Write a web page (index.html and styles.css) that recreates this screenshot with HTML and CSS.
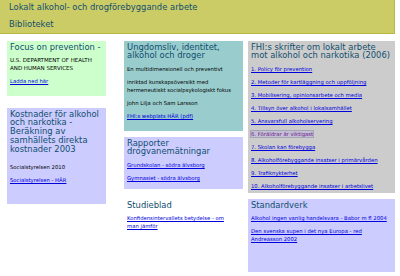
FILE: index.html
```
<!DOCTYPE html>
<html>

<head>
    <title>Biblioteket</title>
    <link rel="stylesheet" href="styles.css">
</head>

<body>
    <div class="top">
        <p>Lokalt alkohol- och drogförebyggande arbete</p>
        <p>Biblioteket</p>
    </div>

    <div class="cols">
        <div class="col col-a">
            <div class="box green focus">
                <h2>Focus on prevention -</h2>
                <p class="caps">U.S. DEPARTMENT OF HEALTH<br>AND HUMAN SERVICES</p>
                <p><a href="#">Ladda ned här</a></p>
            </div>
            <div class="box lav kostnad">
                <h2>Kostnader för alkohol<br>och narkotika -<br>Beräkning av<br>samhällets direkta<br>kostnader 2003</h2>
                <p class="after">Socialstyrelsen 2010</p>
                <p><a href="#">Socialstyrelsen - HÄR</a></p>
            </div>
        </div>

        <div class="col col-b">
            <div class="box teal ungdom">
                <h2>Ungdomsliv, identitet,<br>alkohol och droger</h2>
                <p>En multidimensionell och preventivt</p>
                <p>inriktad kunskapsöversikt med<br>hermeneutiskt socialpsykologiskt fokus</p>
                <p>John Lilja och Sam Larsson</p>
                <p><a href="#">FHI:s webplats HÄR (pdf)</a></p>
            </div>
            <div class="box lav rapport">
                <h2>Rapporter<br>drogvanemätningar</h2>
                <p><a href="#">Grundskolan - södra älvsborg</a></p>
                <p><a href="#">Gymnasiet - södra älvsborg</a></p>
            </div>
            <div class="box studie">
                <h2>Studieblad</h2>
                <p><a href="#">Konfidensintervallets betydelse - om<br>man jämför</a></p>
            </div>
        </div>

        <div class="col col-c">
            <div class="box gray fhi">
                <h2>FHI:s skrifter om lokalt arbete<br>mot alkohol och narkotika (2006)</h2>
                <p><a href="#">1. Policy för prevention</a></p>
                <p><a href="#">2. Metoder för kartläggning och uppföljning</a></p>
                <p><a href="#">3. Mobilisering, opinionsarbete och media</a></p>
                <p><a href="#">4. Tillsyn över alkohol i lokalsamhället</a></p>
                <p><a href="#">5. Ansvarsfull alkoholservering</a></p>
                <p><a href="#" class="seen">6. Föräldrar är viktigast</a></p>
                <p><a href="#">7. Skolan kan förebygga</a></p>
                <p><a href="#">8. Alkoholförebyggande insatser i primärvården</a></p>
                <p><a href="#">9. Trafiknykterhet</a></p>
                <p><a href="#">10. Alkoholförebyggande insatser i arbetslivet</a></p>
            </div>
            <div class="box lav standard">
                <h2>Standardverk</h2>
                <p><a href="#">Alkohol ingen vanlig handelsvara - Babor m fl 2004</a></p>
                <p><a href="#">Den svenska supen i det nya Europa - red<br>Andreasson 2002</a></p>
            </div>
        </div>
    </div>
</body>

</html>
```

FILE: styles.css
```
body {
    margin: 0;
    font-family: "DejaVu Sans", Verdana, sans-serif;
    background: #fff;
    color: #000;
}

.top {
    width: 394px;
    height: 33px;
    background: #cccc66;
    border-right: 1px solid #b8b840;
    border-bottom: 1px solid #b8b840;
    padding-left: 0;
}

.top p {
    margin: 0;
    padding-left: 9px;
    font-size: 8.4px;
    line-height: 10px;
    color: #104e6e;
    white-space: nowrap;
}

.top p:first-child {
    padding-top: 2px;
}

.top p + p {
    margin-top: 7px;
}

.cols {
    display: flex;
    margin-top: 7px;
    padding-left: 7px;
}

.col {
    display: flex;
    flex-direction: column;
}

.col-a {
    width: 99px;
    gap: 12px;
}

.col-b {
    width: 119px;
    margin-left: 18px;
    gap: 6px;
}

.col-c {
    width: 147px;
    margin-left: 5px;
    gap: 6px;
}

.box {
    box-sizing: border-box;
    padding: 1.5px 3px;
}

.green { background: #ccffcc; }
.teal { background: #99cccc; }
.lav { background: #ccccff; }
.gray { background: #cccccc; }

.focus { height: 55px; }
.kostnad { height: 96px; }
.ungdom { height: 90px; }
.rapport { height: 52px; }
.studie { margin-top: 4px; }
.fhi { height: 152px; }
.standard { height: 73px; }

h2 {
    margin: 0 0 3px;
    font-size: 8.4px;
    line-height: 8.8px;
    font-weight: normal;
    color: #104e6e;
    white-space: nowrap;
}

p {
    margin: 4.7px 0 0;
    font-size: 5.3px;
    line-height: 8.3px;
    white-space: nowrap;
}

p.caps {
    font-size: 5.5px;
}

p.after {
    margin-top: 10px;
}

a {
    color: #0000dd;
    text-decoration: underline;
}

a.seen {
    color: #6a1a8b;
    background: #c4c0d4;
    outline: 1px solid #a8a4b8;
}
```
